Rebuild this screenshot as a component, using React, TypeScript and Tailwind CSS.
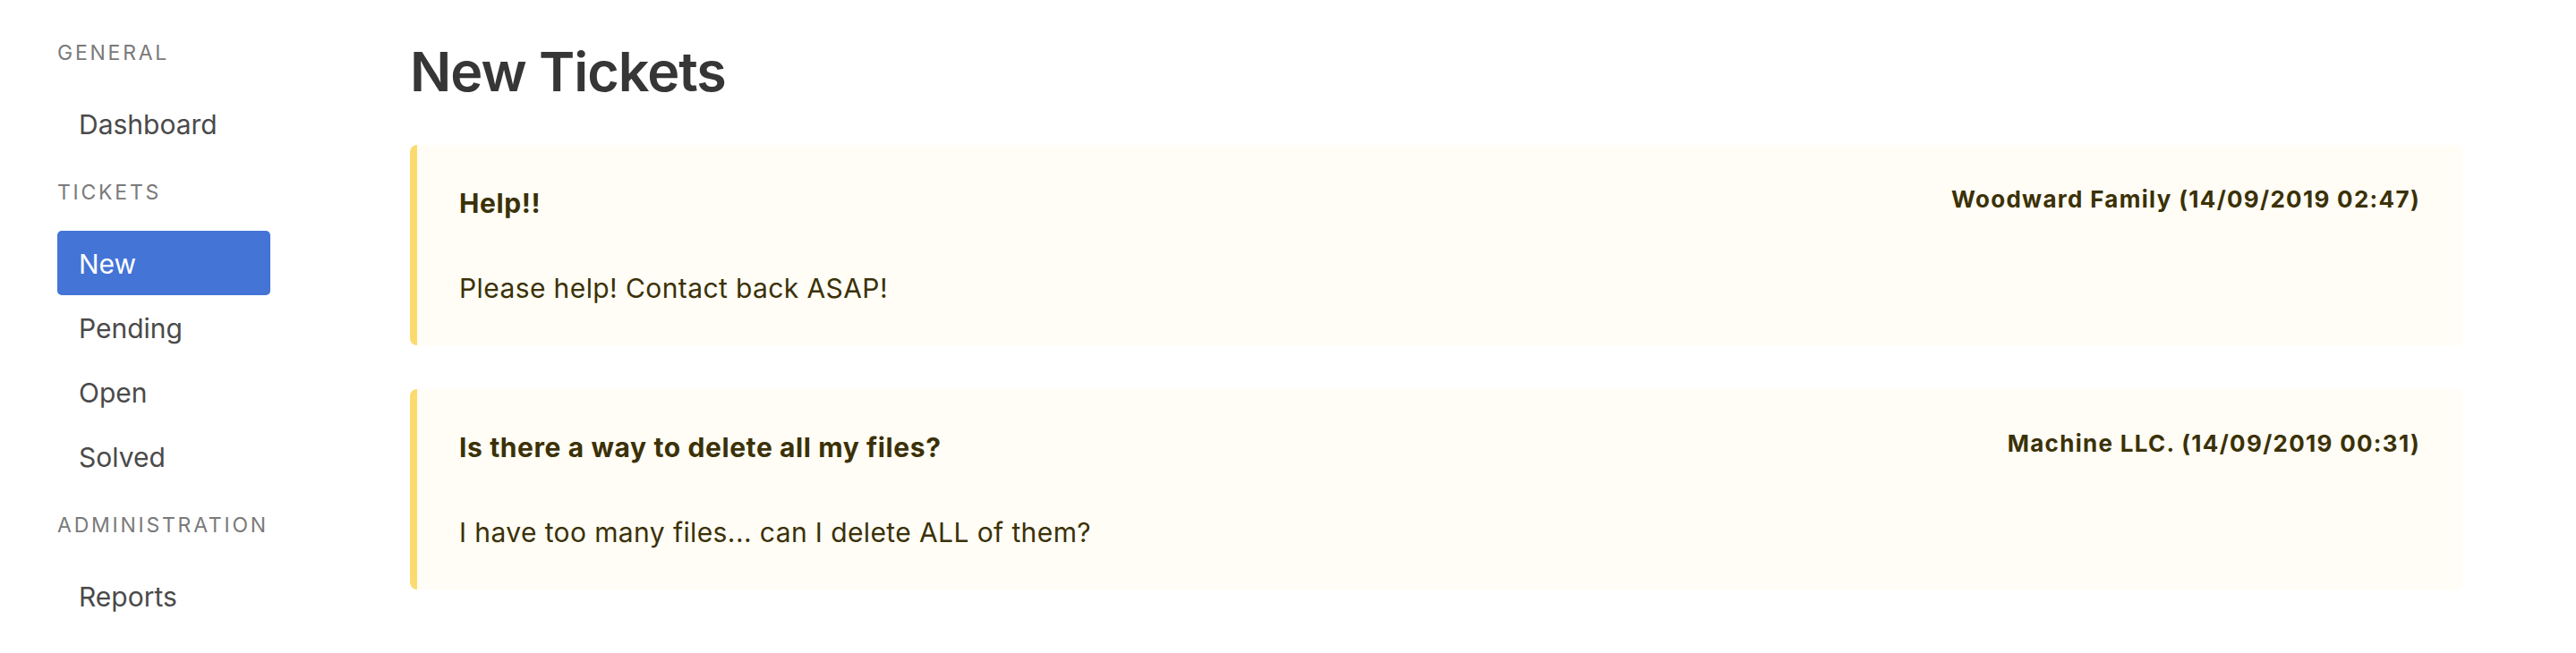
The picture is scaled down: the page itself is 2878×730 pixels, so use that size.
import React from "react";

const font = { fontFamily: 'Inter, "Noto Sans", sans-serif' };

function Label({ children }: { children: React.ReactNode }) {
  return (
    <p className="h-[28px] text-[23px] leading-[28px] tracking-[0.12em] uppercase text-[#7a7a7a] mb-[29px]">
      {children}
    </p>
  );
}

function Item({ children, active }: { children: React.ReactNode; active?: boolean }) {
  return (
    <li>
      <a
        className={
          active
            ? "block h-[72px] pt-[2px] pl-[24px] text-[30px] leading-[70px] rounded-[5px] bg-[#4374d6] text-white"
            : "block h-[72px] pt-[2px] pl-[24px] text-[30px] leading-[70px] rounded-[5px] text-[#4a4a4a]"
        }
      >
        {children}
      </a>
    </li>
  );
}

function Ticket({ title, author, body }: { title: string; author: string; body: string }) {
  return (
    <div className="w-[2294px] h-[224px] rounded-[8px] border-l-[8px] border-[#fbda6f] bg-[#fffdf5] pl-[47px] pr-[48px] pt-[43px] text-[#3b3108]">
      <div className="flex items-start justify-between">
        <span className="text-[30px] leading-[44px] font-bold tracking-[0.6px]">{title}</span>
        <span className="text-[26px] leading-[36px] font-bold tracking-[1.3px]">{author}</span>
      </div>
      <p className="mt-[51px] text-[30px] leading-[44px] tracking-[0.4px]">{body}</p>
    </div>
  );
}

export default function App() {
  return (
    <div className="flex w-[2878px] h-[730px] bg-white" style={font}>
      <aside className="w-[458px] shrink-0 pl-[64px] pt-[45px]">
        <div className="w-[238px]">
          <Label>General</Label>
          <ul className="mb-[27px]">
            <Item>Dashboard</Item>
          </ul>
          <Label>Tickets</Label>
          <ul className="mb-[27px]">
            <Item active>New</Item>
            <Item>Pending</Item>
            <Item>Open</Item>
            <Item>Solved</Item>
          </ul>
          <Label>Administration</Label>
          <ul>
            <Item>Reports</Item>
          </ul>
        </div>
      </aside>
      <main className="pt-[44px]">
        <h1 className="text-[61px] leading-[72px] font-semibold tracking-[-1px] text-[#363636] mb-[46px]">
          New Tickets
        </h1>
        <div className="flex flex-col gap-[49px]">
          <Ticket
            title="Help!!"
            author="Woodward Family (14/09/2019 02:47)"
            body="Please help! Contact back ASAP!"
          />
          <Ticket
            title="Is there a way to delete all my files?"
            author="Machine LLC. (14/09/2019 00:31)"
            body="I have too many files... can I delete ALL of them?"
          />
        </div>
      </main>
    </div>
  );
}
